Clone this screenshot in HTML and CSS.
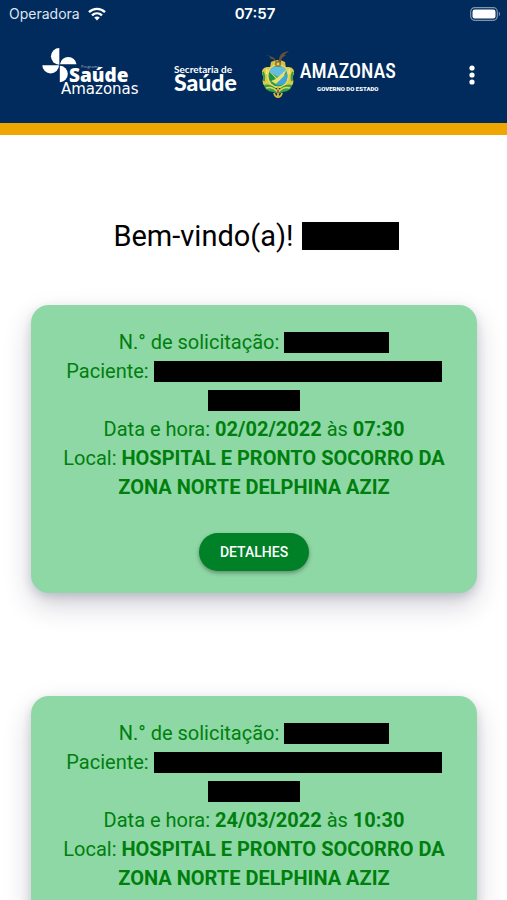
FILE: index.html
```
<!DOCTYPE html>
<html lang="pt-BR">
<head>
    <meta charset="UTF-8">
    <meta name="viewport" content="width=device-width, initial-scale=1">
    <title>Saúde Amazonas</title>
    <link rel="stylesheet" href="styles.css">
</head>
<body>
    <header class="header">
        <div class="status-bar">
            <div class="carrier">
                <span>Operadora</span>
                <svg width="18" height="14" viewBox="0 0 18 14" fill="none" stroke="#fff" stroke-width="2.4">
                    <path d="M1 5.200C5.500 .8 12.500 .8 17 5.200"/>
                    <path d="M4 8.400C6.900 5.700 11.100 5.700 14 8.400"/>
                    <path d="M9 13.400L6.200 10.600C7.800 9.200 10.200 9.200 11.800 10.600Z" fill="#fff" stroke="none"/>
                </svg>
            </div>
            <span class="clock">07:57</span>
            <svg class="battery" width="31" height="14" viewBox="0 0 31 14">
                <rect x=".7" y=".7" width="26.600" height="12.600" rx="4" fill="none" stroke="#7f95ad" stroke-width="1.200"/>
                <rect x="2.500" y="2.500" width="23" height="9" rx="2.200" fill="#fff"/>
                <path d="M28.800 4.800C30.400 5.300 30.400 8.700 28.800 9.200Z" fill="#7f95ad"/>
            </svg>
        </div>

        <!-- logos -->
        <div class="toolbar">
            <svg class="logo-programa" width="100" height="52" viewBox="0 0 100 52" fill="#fff">
                <path d="M17.300 -1V15.700A8.300 8.300 0 0 1 17.300 -1Z"/>
                <path d="M18 15.300A8.300 8.300 0 0 1 34.500 15.300Z"/>
                <path d="M17 16.200A8.300 8.300 0 0 1 .3 16.200Z"/>
                <path d="M17.800 16.700A8 8.300 0 0 1 17.800 33.300Z"/>
                <text class="logo-tiny" x="39" y="19">Programa</text>
                <text class="logo-saude" x="27" y="33">Saúde</text>
                <text class="logo-amazonas" x="19" y="45">Amazonas</text>
            </svg>
            <div class="logo-secretaria">
                <span>Secretaria de</span>
                <strong>Saúde</strong>
            </div>
            <div class="logo-governo">
                <svg width="36" height="48" viewBox="0 0 36 48">
                    <!-- ramos laterais -->
                    <path d="M7 16Q1 17 2 23Q4 25 3 28Q1 33 7 37L29 37Q35 33 33 28Q32 25 34 23Q35 17 29 16Z" fill="#d9cb45"/>
                    <path d="M3 21Q5 25 4 30M33 21Q31 25 32 30" fill="none" stroke="#3a9a4a" stroke-width="2"/>
                    <path d="M6 18Q8 20 6 23M30 18Q28 20 30 23" fill="none" stroke="#f1e98a" stroke-width="1.500"/>
                    <!-- brasão -->
                    <path d="M11 11Q18 7 25 11L26 17H10Z" fill="#d8bf42"/>
                    <ellipse cx="18" cy="25" rx="11" ry="12" fill="#eadc62"/>
                    <ellipse cx="18" cy="25" rx="9.500" ry="10.500" fill="#2f9a4e"/>
                    <path d="M9 21Q11 15 18 15Q25 15 27 21L18 26Z" fill="#63bde0"/>
                    <path d="M27 22Q29 31 22 34L16 34L20 28Z" fill="#3fa5dc"/>
                    <path d="M9 20L17 27L26 19L24 25L16 33L11 30L16 28Z" fill="#e6e26a"/>
                    <path d="M10 22L15 27L11 30Q8 26 10 22Z" fill="#239149"/>
                    <!-- águia -->
                    <path d="M17 12C16 7 12 5 6 4L11 6L9 7L15 9L17 14H20L22 7L26 4L24 4L29 0C23 1 20 3 19 8Z" fill="#66523a"/>
                    <circle cx="18" cy="13" r="3" fill="#8a7834"/>
                    <circle cx="18" cy="13" r="1.500" fill="#e2cd64"/>
                    <path d="M4 34Q10 32 18 39Q26 32 32 34Q31 40 23 41L18 43L13 41Q5 40 4 34Z" fill="#38a04d"/>
                    <path d="M6 37Q12 35 18 41Q24 35 30 37" fill="none" stroke="#dfd751" stroke-width="1.500"/>
                    <path d="M18 35V46M14 42Q15 46 18 46Q21 46 22 42" fill="none" stroke="#d6b637" stroke-width="1.800"/>
                    <path d="M17 39H19V42H17Z" fill="#c65332"/>
                </svg>
                <div class="governo-nome">
                    <strong>AMAZONAS</strong>
                    <span>GOVERNO DO ESTADO</span>
                </div>
            </div>
            <button class="menu-button" type="button" aria-label="Menu">
                <svg width="6" height="20" viewBox="0 0 6 20" fill="#fff">
                    <circle cx="3" cy="3" r="2.600"/>
                    <circle cx="3" cy="10" r="2.600"/>
                    <circle cx="3" cy="17" r="2.600"/>
                </svg>
            </button>
        </div>
    </header>

    <main class="content">
        <h1 class="welcome">Bem-vindo(a)! <span class="hidden-name"></span></h1>

        <section class="card">
            <p>N.° de solicitação: <span class="hidden-data numero"></span></p>
            <p>Paciente: <span class="hidden-data nome"></span> <span class="hidden-data sobrenome"></span></p>
            <p>Data e hora: <b>02/02/2022</b> às <b>07:30</b></p>
            <p>Local: <b>HOSPITAL E PRONTO SOCORRO DA ZONA NORTE DELPHINA AZIZ</b></p>
            <button class="details-button" type="button">DETALHES</button>
        </section>

        <section class="card">
            <p>N.° de solicitação: <span class="hidden-data numero"></span></p>
            <p>Paciente: <span class="hidden-data nome"></span> <span class="hidden-data sobrenome"></span></p>
            <p>Data e hora: <b>24/03/2022</b> às <b>10:30</b></p>
            <p>Local: <b>HOSPITAL E PRONTO SOCORRO DA ZONA NORTE DELPHINA AZIZ</b></p>
        </section>
    </main>
</body>
</html>
```

FILE: styles.css
```
* {
    box-sizing: border-box;
}

html {
    scrollbar-width: none;
}

body {
    margin: 0;
    font-family: Roboto, sans-serif;
    background-color: #fff;
}

.header {
    background-color: #002b5c;
    color: #fff;
    border-bottom: 12px solid #eea600;
}

.status-bar {
    display: grid;
    grid-template-columns: 1fr auto 1fr;
    align-items: center;
    height: 27px;
    padding: 0 6px 0 9px;
    font-family: Inter, sans-serif;
    font-size: 14px;
}

.carrier {
    display: flex;
    align-items: center;
    gap: 8px;
    color: #dfe6ee;
}

.clock {
    font-size: 15px;
    font-weight: 600;
}

.battery {
    justify-self: end;
}

/* barra com os logos */
.toolbar {
    display: flex;
    align-items: center;
    height: 96px;
    padding: 0 24px 0 42px;
}

.logo-programa {
    overflow: visible;
}

.logo-tiny {
    font-family: "Open Sans", sans-serif;
    font-size: 4px;
    opacity: 0.6;
}

.logo-saude {
    font-family: "Open Sans", sans-serif;
    font-size: 19px;
    font-weight: 800;
}

.logo-amazonas {
    font-family: "DejaVu Sans", sans-serif;
    font-size: 15px;
}

.logo-secretaria {
    display: flex;
    flex-direction: column;
    margin-left: 32px;
    padding-top: 4px;
    font-family: Lato, sans-serif;
    font-size: 10px;
    font-weight: 700;
    line-height: 10px;
}

.logo-secretaria strong {
    font-size: 23px;
    font-weight: 900;
    line-height: 17px;
}

.logo-governo {
    display: flex;
    align-items: center;
    gap: 4px;
    margin-left: 23px;
}

.governo-nome {
    display: flex;
    flex-direction: column;
    align-items: center;
    font-size: 6px;
    font-weight: 900;
    line-height: 8px;
}

.governo-nome strong {
    font-family: "Roboto Condensed", Roboto, sans-serif;
    font-size: 20px;
    font-weight: 500;
    line-height: 28px;
}

.menu-button {
    display: flex;
    margin-left: auto;
    padding: 4px 8px;
    background: none;
    border: none;
    cursor: pointer;
}

.content {
    padding: 80px 30px 0 31px;
}

.welcome {
    display: flex;
    justify-content: center;
    align-items: center;
    gap: 8px;
    margin: 0 0 48px;
    padding-left: 4px;
    color: #000;
    font-size: 29px;
    font-weight: 400;
    line-height: 42px;
}

.hidden-name {
    width: 97px;
    height: 28px;
    background-color: #000;
}

.card {
    margin-bottom: 103px;
    padding: 23px 30px 22px;
    background-color: #8ed8a5;
    border-radius: 18px;
    box-shadow: 0 12px 28px rgba(30, 30, 70, 0.2), 0 4px 10px rgba(30, 30, 70, 0.16);
    color: #007f0e;
    font-size: 20px;
    line-height: 29px;
    text-align: center;
}

.card p {
    margin: 0;
}

.hidden-data {
    display: inline-block;
    height: 21px;
    background-color: #000;
    vertical-align: -4px;
}

.numero {
    width: 105px;
}

.nome {
    width: 288px;
}

.sobrenome {
    width: 92px;
}

.details-button {
    height: 38px;
    margin-top: 31px;
    padding: 0 21px;
    background-color: #008027;
    color: #fff;
    border: none;
    border-radius: 19px;
    box-shadow: 0 2px 4px rgba(0, 0, 0, 0.35);
    font-family: Roboto, sans-serif;
    font-size: 14px;
    font-weight: 500;
    cursor: pointer;
}

.details-button:hover {
    background-color: #006b20;
}
```
